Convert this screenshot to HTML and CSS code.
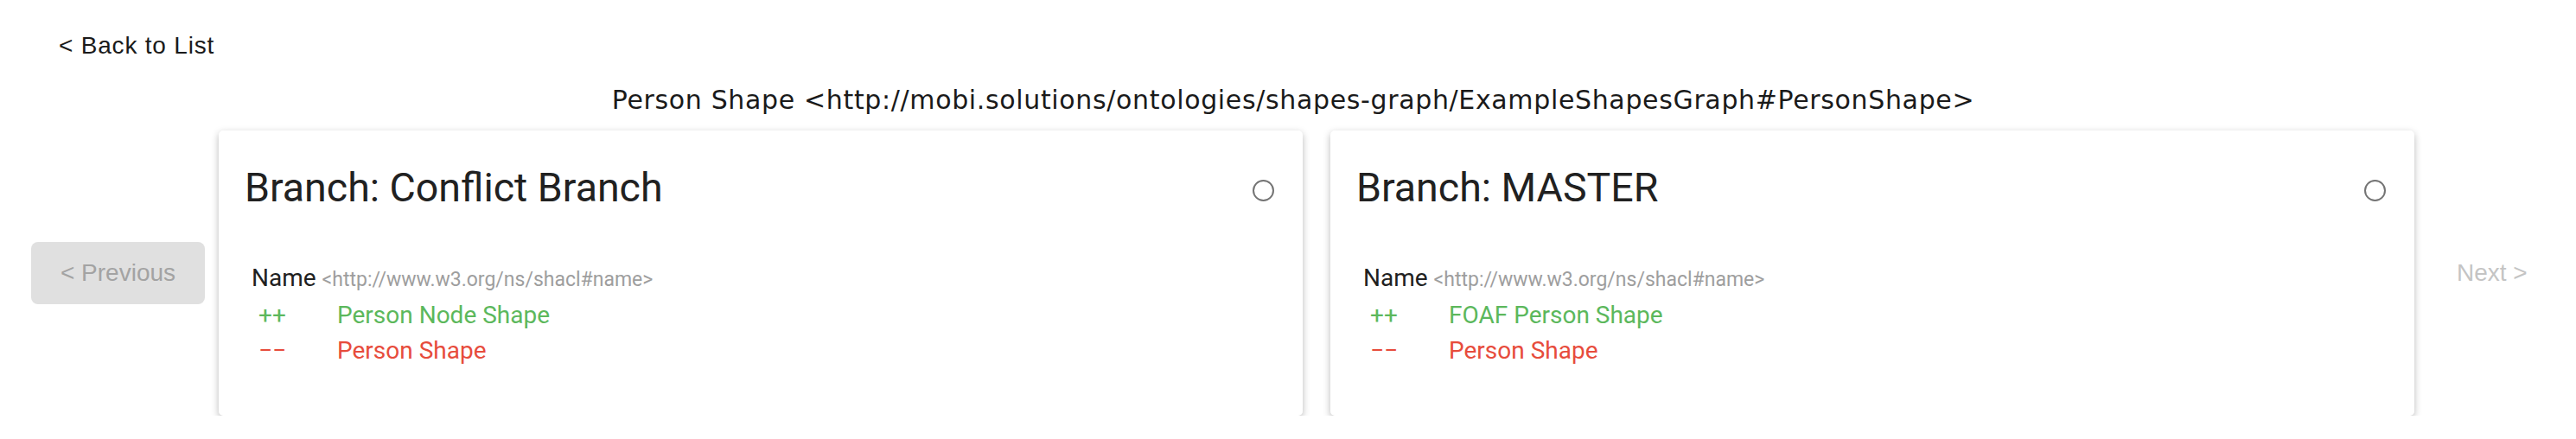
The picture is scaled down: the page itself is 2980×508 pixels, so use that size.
FILE: index.html
```html
<!DOCTYPE html>
<html lang="en">
<head>
<meta charset="utf-8">
<title>Merge Conflict</title>
<link rel="stylesheet" href="styles.css">
</head>
<body>
<div class="page">
  <div class="back">&lt; Back to List</div>
  <div class="subject">Person Shape &lt;http://mobi.solutions/ontologies/shapes-graph/ExampleShapesGraph#PersonShape&gt;</div>
  <div class="row">
    <button class="nav-btn prev" type="button">&lt; Previous</button>
    <div class="card">
      <div class="card-header">
        <h3 class="card-title">Branch: Conflict Branch</h3>
        <span class="radio"></span>
      </div>
      <div class="diff">
        <div class="prop"><span class="prop-name">Name</span> <span class="prop-iri">&lt;http://www.w3.org/ns/shacl#name&gt;</span></div>
        <div class="change added"><span class="sign">++</span><span class="val">Person Node Shape</span></div>
        <div class="change deleted"><span class="sign">−−</span><span class="val">Person Shape</span></div>
      </div>
    </div>
    <div class="card">
      <div class="card-header">
        <h3 class="card-title">Branch: MASTER</h3>
        <span class="radio"></span>
      </div>
      <div class="diff">
        <div class="prop"><span class="prop-name">Name</span> <span class="prop-iri">&lt;http://www.w3.org/ns/shacl#name&gt;</span></div>
        <div class="change added"><span class="sign">++</span><span class="val">FOAF Person Shape</span></div>
        <div class="change deleted"><span class="sign">−−</span><span class="val">Person Shape</span></div>
      </div>
    </div>
    <button class="nav-btn next" type="button">Next &gt;</button>
  </div>
</div>
</body>
</html>
```

FILE: styles.css
```css
html, body {
  margin: 0;
  padding: 0;
  background: #ffffff;
}

.page {
  font-family: "Liberation Sans", Arial, sans-serif;
  color: #212121;
}

.back {
  font-size: 28px;
  line-height: 35px;
  padding: 35px 0 0 68px;
  letter-spacing: 0.8px;
  color: #1a1a1a;
}

.subject {
  font-family: "DejaVu Sans", Verdana, sans-serif;
  font-size: 30px;
  line-height: 35px;
  letter-spacing: 0.65px;
  margin-top: 28px;
  padding-left: 12px;
  text-align: center;
  color: #1a1a1a;
}

.row {
  display: flex;
  align-items: center;
  margin-top: 18px;
  padding-left: 36px;
}

.nav-btn {
  font-family: "Liberation Sans", Arial, sans-serif;
  font-size: 28px;
  height: 72px;
  padding: 0 32px;
  border: none;
  border-radius: 8px;
  flex: none;
}

.prev {
  width: 201px;
  background: #e0e0e0;
  color: #a3a3a3;
  margin-right: 16px;
}

.next {
  background: transparent;
  color: #c4c4c4;
  margin-left: 17px;
}

.card {
  width: 1254px;
  height: 330px;
  box-sizing: border-box;
  flex: none;
  background: #fff;
  border-radius: 5px;
  box-shadow: 0 3px 8px rgba(0, 0, 0, 0.28);
  font-family: Roboto, "Noto Sans", sans-serif;
  padding: 39px 33px 0 30px;
}

.card + .card {
  margin-left: 32px;
}

.card-header {
  display: flex;
  align-items: center;
  justify-content: space-between;
}

.card-title {
  margin: 0;
  font-size: 46.5px;
  font-weight: 400;
  line-height: 55px;
  color: #212121;
}

.radio {
  width: 21px;
  height: 21px;
  border: 2px solid #747474;
  border-radius: 50%;
  margin-top: 5px;
  flex: none;
}

.diff {
  margin-top: 56px;
  padding-left: 8px;
  font-size: 28px;
  line-height: 41px;
}

.prop-name {
  color: #212121;
}

.prop-iri {
  color: #9e9e9e;
  font-size: 23px;
}

.change {
  padding-left: 8px;
}

.sign {
  display: inline-block;
  width: 91px;
}

.added {
  color: #5cb85c;
}

.deleted {
  color: #e74c3c;
}
```
